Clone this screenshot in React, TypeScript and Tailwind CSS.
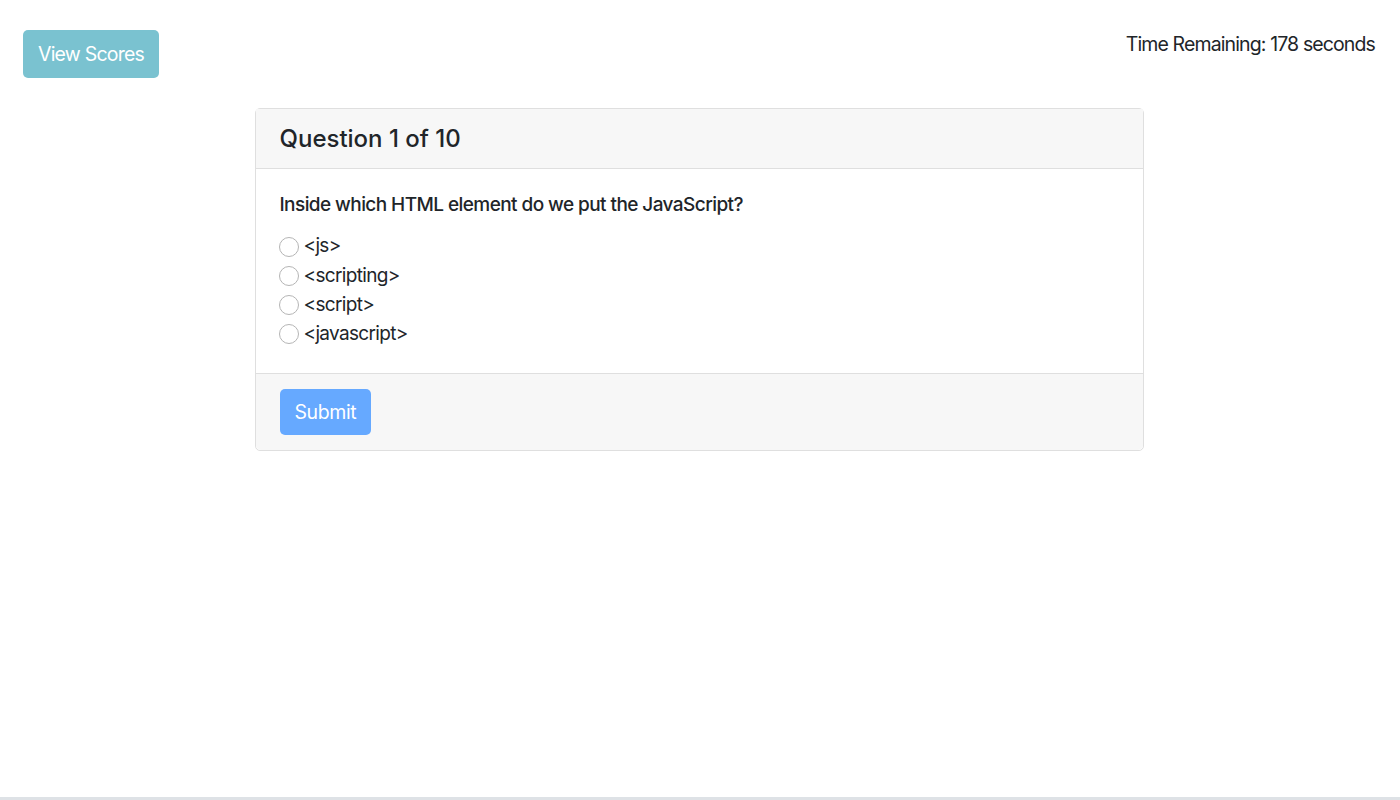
const options = ["<js>", "<scripting>", "<script>", "<javascript>"];

export default function App() {
  return (
    <div className="flex min-h-screen flex-col bg-white font-['Inter','Liberation_Sans',sans-serif] text-[#212529]">
      <div className="flex-1">
        {/* Top bar */}
        <header className="flex items-start justify-between pl-[23px] pr-[25px] pt-[30px]">
          <button className="h-[48px] rounded-[5px] bg-[#7ac2d0] px-[15px] text-[19.5px] leading-[30px] tracking-[-0.04em] text-white">
            View Scores
          </button>
          <div className="mt-[-1px] text-[19.5px] leading-[30px] tracking-[-0.045em]">
            Time Remaining: 178 seconds
          </div>
        </header>

        {/* Question card */}
        <section className="mx-auto mt-[30px] w-[889px] -translate-x-px rounded-[5px] border border-[#dfdfdf]">
          <div className="border-b border-[#dfdfdf] bg-[#f7f7f7] px-[24px] py-[14px]">
            <h2 className="text-[24px] font-medium leading-[31px]">Question 1 of 10</h2>
          </div>

          <div className="px-[23px] pb-[24px] pt-[24px]">
            <p className="mb-[15px] pl-px text-[19px] font-medium leading-[24px] tracking-[-0.03em]">
              Inside which HTML element do we put the JavaScript?
            </p>
            <div className="flex flex-col">
              {options.map((o) => (
                <label key={o} className="flex h-[29.25px] items-center gap-[5px] text-[19px] tracking-[-0.035em]">
                  <span className="h-[20px] w-[20px] rounded-full border border-[#b5b5b5] bg-white" />
                  <span>{o}</span>
                </label>
              ))}
            </div>
          </div>

          <div className="rounded-b-[5px] border-t border-[#dfdfdf] bg-[#f7f7f7] px-[24px] py-[15px]">
            <button className="h-[46px] rounded-[5px] bg-[#66a9ff] px-[15px] text-[19.5px] leading-[30px] tracking-[-0.02em] text-white">
              Submit
            </button>
          </div>
        </section>
      </div>

      <div className="h-[3px] bg-[#dee2e6]" />
    </div>
  );
}
